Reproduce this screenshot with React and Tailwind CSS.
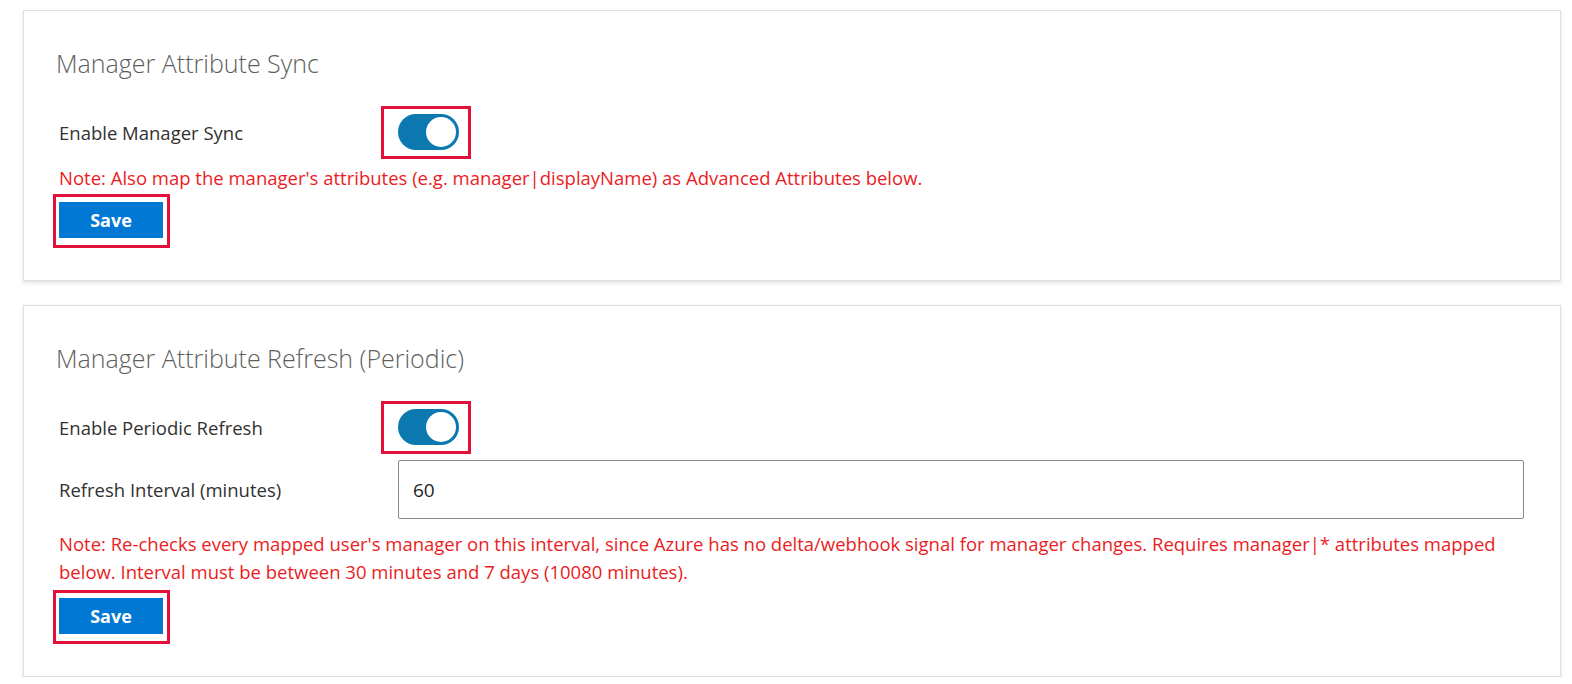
import { useState } from 'react'

const font = { fontFamily: '"Open Sans", "Noto Sans", sans-serif' }

function Toggle({ on, onChange }) {
  return (
    <div className="-ml-[17px] w-[90px] h-[53px] border-[3px] border-[#e3103a] pl-[14px] pt-[5px]">
      <button
        onClick={() => onChange(!on)}
        className={`w-[61px] h-[36px] rounded-full p-[3px] flex ${on ? 'justify-end bg-[#0b79b0]' : 'justify-start bg-[#8a8886]'}`}
      >
        <span className="block w-[30px] h-[30px] rounded-full bg-white" />
      </button>
    </div>
  )
}

function SaveButton() {
  return (
    <div className="-ml-[6px] w-[117px] h-[54px] border-[3px] border-[#e3103a] pl-[3px] pt-[5px]">
      <button className="w-[104px] h-[36px] bg-[#0078d4] text-white text-[18px] font-bold leading-none">
        Save
      </button>
    </div>
  )
}

function Card({ title, children }) {
  return (
    <div className="bg-white border border-[#e1dfdd] shadow-[0_2px_4px_rgba(0,0,0,0.12)] pl-[32px] pr-[36px] pt-[36px] pb-[32px]">
      <h2 className="text-[25px] leading-[32px] font-light text-[#605e5c]">{title}</h2>
      <div className="pl-[3px]">{children}</div>
    </div>
  )
}

export default function App() {
  const [sync, setSync] = useState(true)
  const [refresh, setRefresh] = useState(true)
  const [interval, setInterval] = useState('60')

  return (
    <div className="bg-white pt-[10px] pl-[23px] pr-[11px] flex flex-col gap-[24px]" style={font}>
      <Card title="Manager Attribute Sync">
        <div className="mt-[27px] flex items-center">
          <span className="w-[339px] text-[18.5px] text-[#323130]">Enable Manager Sync</span>
          <Toggle on={sync} onChange={setSync} />
        </div>
        <p className="mt-[5px] text-[18.5px] leading-[28px] text-[#eb1c24]">
          Note: Also map the manager's attributes (e.g. manager|displayName) as Advanced Attributes below.
        </p>
        <div className="mt-[2px]">
          <SaveButton />
        </div>
      </Card>

      <Card title="Manager Attribute Refresh (Periodic)">
        <div className="mt-[27px] flex items-center">
          <span className="w-[339px] text-[18.5px] text-[#323130]">Enable Periodic Refresh</span>
          <Toggle on={refresh} onChange={setRefresh} />
        </div>
        <div className="mt-[6px] flex items-center">
          <span className="w-[339px] text-[18.5px] text-[#323130]">Refresh Interval (minutes)</span>
          <input
            value={interval}
            onChange={e => setInterval(e.target.value)}
            className="flex-1 h-[59px] border border-[#8a8886] rounded-[2px] px-[14px] text-[19px] text-[#201f1e] outline-none"
          />
        </div>
        <p className="mt-[11px] text-[18.5px] leading-[28px] text-[#eb1c24]">
          Note: Re-checks every mapped user's manager on this interval, since Azure has no delta/webhook signal for manager changes. Requires manager|* attributes mapped below. Interval must be between 30 minutes and 7 days (10080 minutes).
        </p>
        <div className="mt-[4px]">
          <SaveButton />
        </div>
      </Card>
    </div>
  )
}
